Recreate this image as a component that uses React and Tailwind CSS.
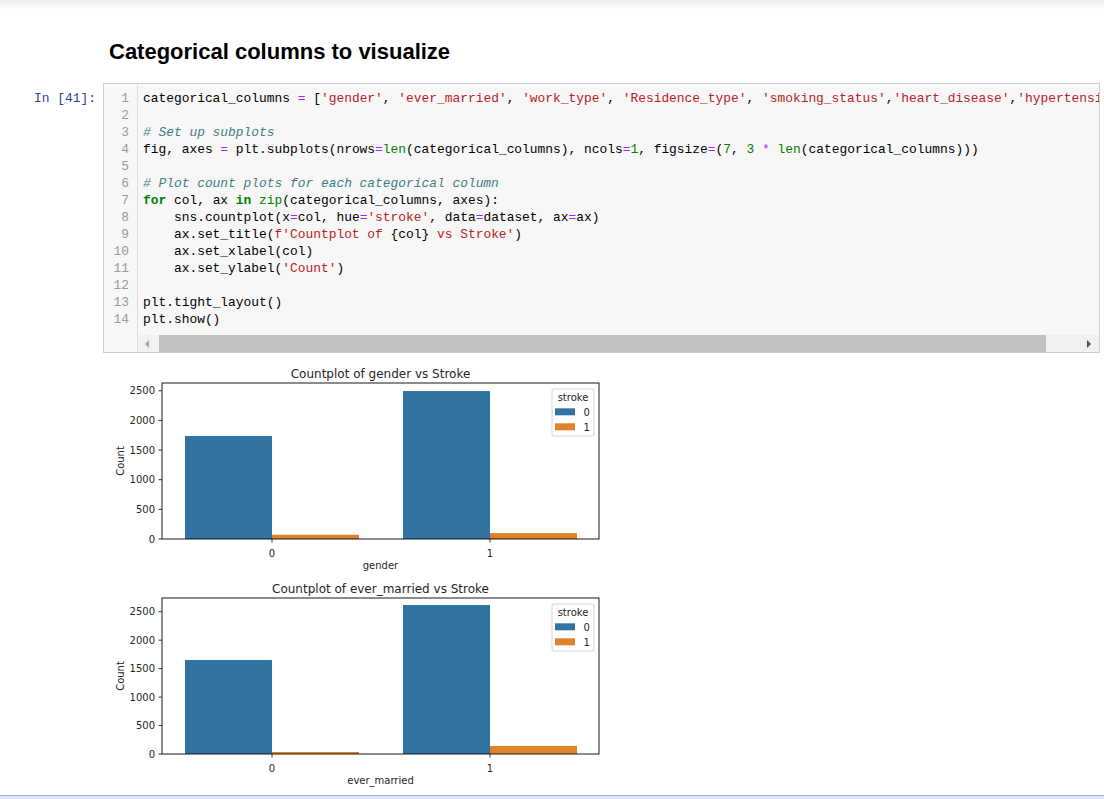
import React from "react";

const S = "text-[#ba2121]";
const K = "text-[#008000] font-bold";
const B = "text-[#008000]";
const O = "text-[#aa22ff]";
const N = "text-[#008000]";
const C = "text-[#408080] italic";

const codeLines = [
  [["categorical_columns "], ["=", O], [" ["], ["'gender'", S], [", "], ["'ever_married'", S], [", "], ["'work_type'", S], [", "], ["'Residence_type'", S], [", "], ["'smoking_status'", S], [","], ["'heart_disease'", S], [","], ["'hypertension'", S], ["]"]],
  [],
  [["# Set up subplots", C]],
  [["fig, axes "], ["=", O], [" plt.subplots(nrows"], ["=", O], ["len", B], ["(categorical_columns), ncols"], ["=", O], ["1", N], [", figsize"], ["=", O], ["("], ["7", N], [", "], ["3", N], [" "], ["*", O], [" "], ["len", B], ["(categorical_columns)))"]],
  [],
  [["# Plot count plots for each categorical column", C]],
  [["for", K], [" col, ax "], ["in", K], [" "], ["zip", B], ["(categorical_columns, axes):"]],
  [["    sns.countplot(x"], ["=", O], ["col, hue"], ["=", O], ["'stroke'", S], [", data"], ["=", O], ["dataset, ax"], ["=", O], ["ax)"]],
  [["    ax.set_title("], ["f'Countplot of ", S], ["{col}"], [" vs Stroke'", S], [")"]],
  [["    ax.set_xlabel(col)"]],
  [["    ax.set_ylabel("], ["'Count'", S], [")"]],
  [],
  [["plt.tight_layout()"]],
  [["plt.show()"]],
];

const BLUE = "#3274a1";
const ORANGE = "#e1812c";

function CountPlot({ title, xlabel, scale, values }) {
  const y0 = 177;
  const ticks = [0, 500, 1000, 1500, 2000, 2500];
  const centers = [172, 390];
  const bw = 87;
  return (
    <svg width="500" height="215" viewBox="0 0 500 215" className="block" fontFamily="'DejaVu Sans', sans-serif" fill="#262626">
      <text x="280.5" y="15.5" fontSize="12" textAnchor="middle">{title}</text>
      {centers.map((c, i) => (
        <g key={i}>
          <rect x={c - bw} y={y0 - values[i * 2] * scale} width={bw} height={values[i * 2] * scale} fill={BLUE} />
          <rect x={c} y={y0 - values[i * 2 + 1] * scale} width={bw} height={values[i * 2 + 1] * scale} fill={ORANGE} />
          <line x1={c} x2={c} y1={y0} y2={y0 + 3.5} stroke="#000" strokeWidth="0.8" />
          <text x={c} y="194.5" fontSize="10" textAnchor="middle">{i}</text>
        </g>
      ))}
      {ticks.map((t) => (
        <g key={t}>
          <line x1="58.5" x2="62" y1={y0 - t * scale} y2={y0 - t * scale} stroke="#000" strokeWidth="0.8" />
          <text x="55" y={y0 - t * scale + 3.6} fontSize="10" textAnchor="end">{t}</text>
        </g>
      ))}
      <rect x="62" y="21" width="437" height="156" fill="none" stroke="#000" strokeWidth="0.9" />
      <text x="280.5" y="207" fontSize="10" textAnchor="middle">{xlabel}</text>
      <text transform="translate(24 99) rotate(-90)" fontSize="10" textAnchor="middle">Count</text>
      <rect x="452" y="27" width="42" height="47" rx="2" fill="#ffffff" fillOpacity="0.8" stroke="#cccccc" strokeWidth="0.8" />
      <text x="473" y="38.5" fontSize="10" textAnchor="middle">stroke</text>
      <rect x="455" y="46.3" width="20" height="7" fill={BLUE} />
      <rect x="455" y="61.3" width="20" height="7" fill={ORANGE} />
      <text x="483.5" y="53.6" fontSize="10">0</text>
      <text x="483.5" y="68.6" fontSize="10">1</text>
    </svg>
  );
}

export default function App() {
  return (
    <div className="h-[799px] w-full bg-white flex flex-col overflow-hidden">
      <div className="h-[10px] bg-gradient-to-b from-[#eeeeee] to-white" />
      <h1 className="ml-[109px] mt-[29px] text-[22px] leading-[26px] font-bold text-black font-['Liberation_Sans',Arial,sans-serif]">
        Categorical columns to visualize
      </h1>

      <div className="mt-[18px] flex font-['Liberation_Mono',monospace] text-[12.9px] leading-[17px]">
        <div className="w-[103px] shrink-0 pt-[7px] pr-[7px] text-right text-[#303f9f]">In&nbsp;[41]:</div>
        <div className="w-[997px] shrink-0 flex border border-[#cfcfcf] bg-[#f7f7f7] overflow-hidden">
          <div className="w-[34px] shrink-0 border-r border-[#dddddd] pt-[6px] pr-[8px] text-right text-[#999999]">
            {codeLines.map((_, i) => (
              <div key={i} className="h-[17px]">{i + 1}</div>
            ))}
          </div>
          <div className="flex-1 min-w-0 flex flex-col">
            <div className="pt-[6px] pl-[5px] pb-[7px] whitespace-pre text-black overflow-hidden">
              {codeLines.map((line, i) => (
                <div key={i} className="h-[17px]">
                  {line.map(([t, cls], j) => (
                    <span key={j} className={cls}>{t}</span>
                  ))}
                </div>
              ))}
            </div>
            <div className="h-[17px] flex bg-[#f1f1f1]">
              <div className="w-[21px] flex items-center justify-center pr-[4px]">
                <div className="w-0 h-0 border-y-[4px] border-y-transparent border-r-[4px] border-r-[#a3a3a3]" />
              </div>
              <div className="w-[887px] bg-[#c1c1c1]" />
              <div className="flex-1" />
              <div className="w-[21px] flex items-center justify-center">
                <div className="w-0 h-0 border-y-[4px] border-y-transparent border-l-[4px] border-l-[#505050]" />
              </div>
            </div>
          </div>
        </div>
      </div>

      <div className="mt-[9px] pl-[100px] flex flex-col">
        <CountPlot title="Countplot of gender vs Stroke" xlabel="gender" scale={0.0593} values={[1737, 72, 2495, 100]} />
        <CountPlot title="Countplot of ever_married vs Stroke" xlabel="ever_married" scale={0.05692} values={[1651, 35, 2618, 140]} />
      </div>

      <div className="mt-auto h-[4px] shrink-0 border-t border-[#a9b4c8] bg-[#dde6f5]" />
    </div>
  );
}
